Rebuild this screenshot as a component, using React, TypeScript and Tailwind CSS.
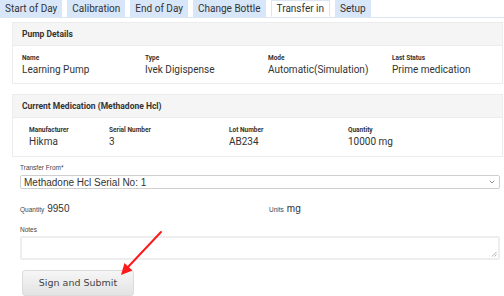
import { ChevronDown } from "lucide-react";

const tabs = ["Start of Day", "Calibration", "End of Day", "Change Bottle", "Transfer in", "Setup"];

function Field({ label, value }: { label: string; value: string }) {
  return (
    <div className="flex flex-col">
      <span className="text-[6.5px] font-bold text-[#333] leading-[10px]">{label}</span>
      <span className="text-[10px] text-[#333] leading-[14px]">{value}</span>
    </div>
  );
}

export default function App() {
  return (
    <div className="relative w-[504px] h-[296px] overflow-hidden bg-white font-['Roboto',sans-serif] text-[#333]">
      <div className="flex h-[18px] gap-[5px] border-b border-[#dce6f3]">
        {tabs.map((t) => (
          <div
            key={t}
            className={
              t === "Transfer in"
                ? "flex items-center px-[5px] text-[10px] bg-white border border-[#dce6f3] border-b-white"
                : "flex items-center px-[5px] text-[10px] bg-[#d7e6f8]"
            }
          >
            {t}
          </div>
        ))}
      </div>

      <div className="ml-[12px] mr-[1px] mt-[4px] border border-[#ececec]">
        <div className="flex h-[23px] items-center bg-[#f5f5f5] border-b border-[#ececec] px-[9px] text-[8.5px] font-bold">
          Pump Details
        </div>
        <div className="grid grid-cols-[123px_123px_124px_1fr] px-[9px] pt-[7px] pb-[6px]">
          <Field label="Name" value="Learning Pump" />
          <Field label="Type" value="Ivek Digispense" />
          <Field label="Mode" value="Automatic(Simulation)" />
          <Field label="Last Status" value="Prime medication" />
        </div>
      </div>

      <div className="ml-[12px] mr-[1px] mt-[10px] border border-[#ececec]">
        <div className="flex h-[23px] items-center bg-[#f5f5f5] border-b border-[#ececec] px-[9px] text-[8.5px] font-bold">
          Current Medication (Methadone Hcl)
        </div>
        <div className="grid grid-cols-[80px_120px_119px_1fr] pl-[16px] pt-[7px] pb-[7px]">
          <Field label="Manufacturer" value="Hikma" />
          <Field label="Serial Number" value="3" />
          <Field label="Lot Number" value="AB234" />
          <Field label="Quantity" value="10000 mg" />
        </div>
      </div>

      <div className="px-[20px] pr-[4px] font-['Liberation_Sans',Arial,sans-serif]">
        <div className="mt-[6px] text-[6.5px] text-[#444] leading-[10px]">Transfer From*</div>
        <div className="mt-[2px] flex h-[14px] items-center justify-between rounded-[2px] border border-[#cfcfcf] pl-[3px] pr-[3px]">
          <span className="text-[10px] text-[#333]">Methadone Hcl Serial No: 1</span>
          <ChevronDown className="w-[8px] h-[8px] text-[#555]" strokeWidth={2} />
        </div>

        <div className="mt-[12px] flex items-baseline">
          <div className="w-[249px] flex items-baseline gap-[3px]">
            <span className="text-[6.5px] text-[#444]">Quantity</span>
            <span className="text-[10px] text-[#333]">9950</span>
          </div>
          <div className="flex items-baseline gap-[3px]">
            <span className="text-[6.5px] text-[#444]">Units</span>
            <span className="text-[10px] text-[#333]">mg</span>
          </div>
        </div>

        <div className="mt-[9px] text-[6.5px] text-[#444] leading-[10px]">Notes</div>
        <div className="relative mt-[1px] h-[24px] rounded-[2px] border-2 border-[#eeeeee]">
          <svg className="absolute right-[1px] bottom-[1px]" width="6" height="6" viewBox="0 0 6 6">
            <path d="M5.5 1 L1 5.5 M5.5 3.5 L3.5 5.5" stroke="#999" strokeWidth="0.8" />
          </svg>
        </div>

        <button className="mt-[10px] ml-[2px] flex h-[26px] w-[112px] items-center justify-center rounded-[3px] border border-[#dcdcdc] bg-gradient-to-b from-[#f6f6f6] to-[#e3e3e3] font-['DejaVu_Sans',Verdana,sans-serif] text-[9.5px] text-[#444]">
          Sign and Submit
        </button>
      </div>

      <svg className="absolute left-0 top-0" width="504" height="296" viewBox="0 0 504 296">
        <line x1="161" y1="232" x2="128" y2="267" stroke="#ff1a1a" strokeWidth="2" strokeLinecap="round" />
        <path d="M121 275 L124.5 263 L132.5 270.5 Z" fill="#ff1a1a" />
      </svg>
    </div>
  );
}
